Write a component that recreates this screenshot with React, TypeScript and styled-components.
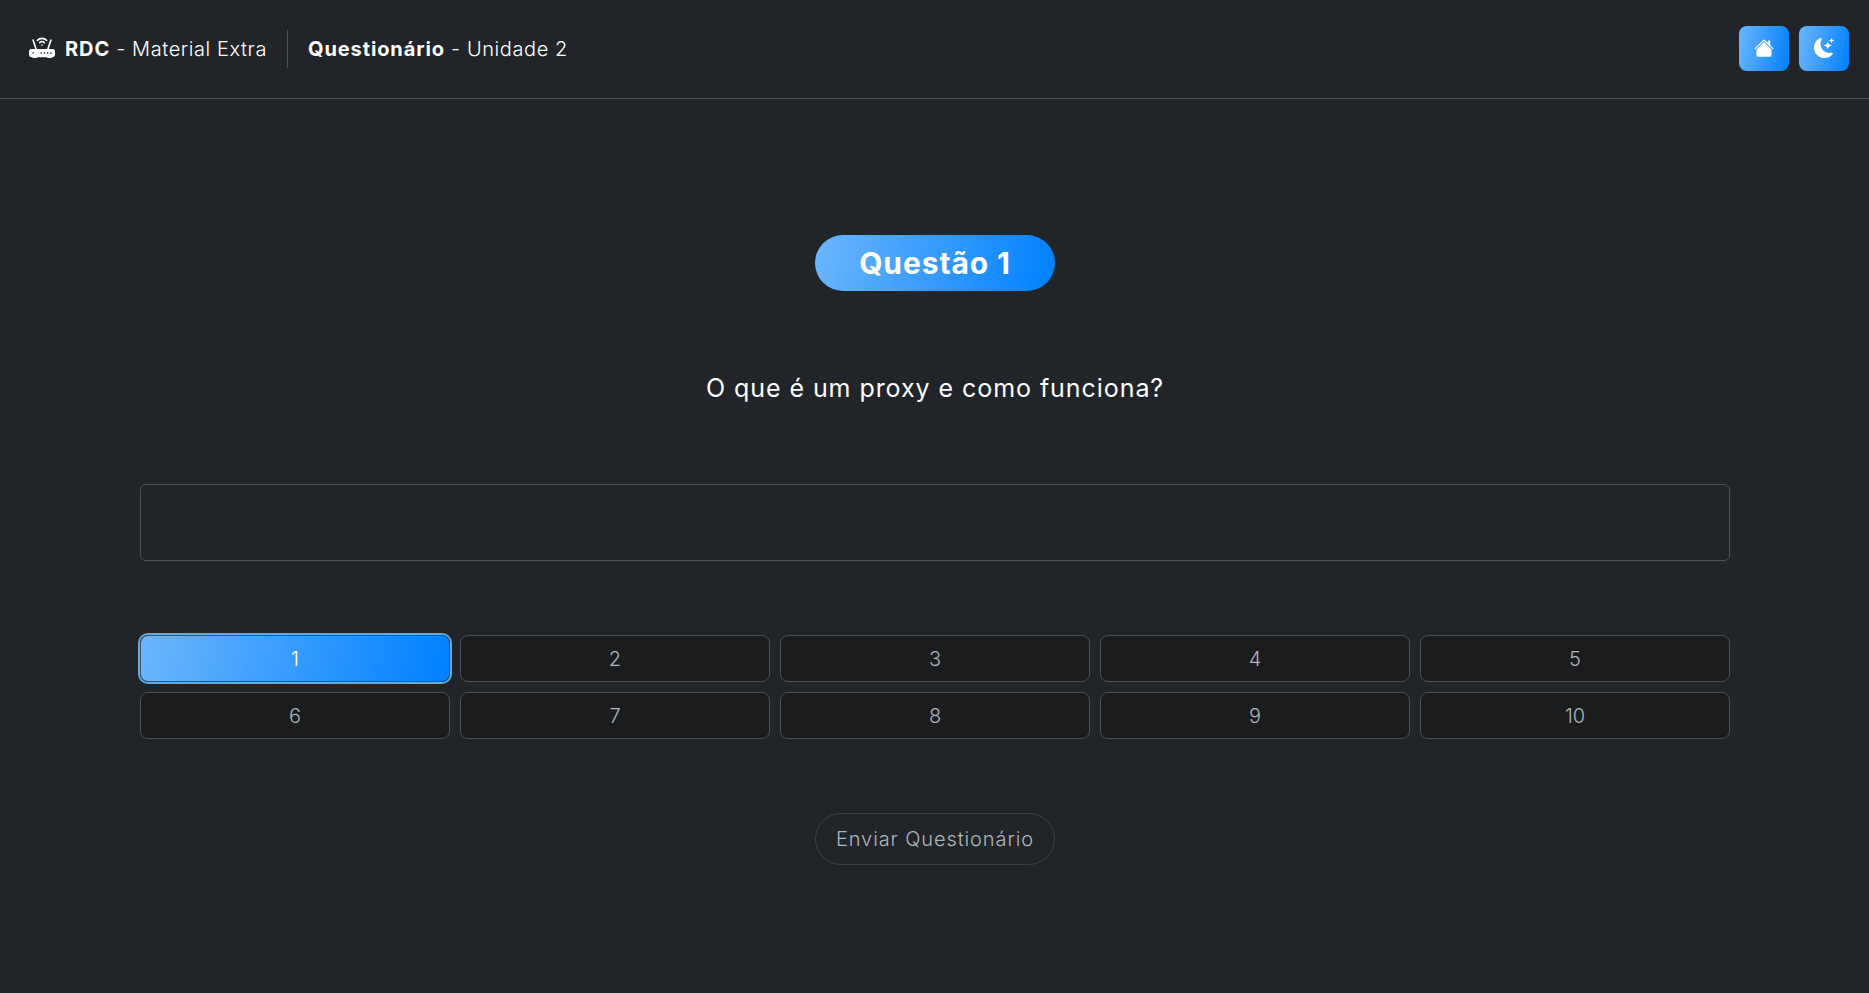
import React from 'react';
import styled, { createGlobalStyle } from 'styled-components';
import { BsHouseFill, BsMoonStarsFill, BsRouterFill } from 'react-icons/bs';

const GlobalStyle = createGlobalStyle`
  html, body {
    margin: 0;
    padding: 0;
    height: 100%;
    background: #212529;
  }

  * {
    box-sizing: border-box;
  }

  body {
    font-family: 'Inter', 'Liberation Sans', sans-serif;
    color: #ffffff;
  }
`;

const gradient = 'linear-gradient(100deg, #6cb6fb 0%, #0080ff 100%)';

const Page = styled.div`
  min-height: 993px;
  background: #212529;
`;

const Header = styled.header`
  display: flex;
  align-items: center;
  justify-content: space-between;
  height: 99px;
  padding: 0 20px 0 29px;
  border-bottom: 1px solid #495057;
`;

const Brand = styled.div`
  display: flex;
  align-items: center;
  font-size: 20px;
  font-weight: 300;
  letter-spacing: 0.58px;
  color: #ffffff;

  b {
    font-weight: 700;
    letter-spacing: 0.9px;
  }
`;

const BrandItem = styled.div`
  display: flex;
  align-items: center;
  gap: 10px;
  height: 38px;
`;

const Divider = styled.div`
  width: 1px;
  height: 38px;
  margin: 0 20px;
  background: #495057;
`;

const HeaderActions = styled.div`
  display: flex;
  gap: 10px;
  margin-top: -2px;
`;

const IconButton = styled.button`
  display: flex;
  align-items: center;
  justify-content: center;
  width: 50px;
  height: 45px;
  padding: 0;
  border: none;
  border-radius: 8px;
  background: ${gradient};
  color: #ffffff;
  font-size: 20px;
`;

const Main = styled.main`
  display: flex;
  flex-direction: column;
  align-items: center;
  padding: 136px 139px 0 140px;
`;

const Badge = styled.div`
  display: flex;
  align-items: center;
  justify-content: center;
  width: 240px;
  height: 56px;
  border-radius: 28px;
  background: ${gradient};
  font-size: 30px;
  font-weight: 700;
  letter-spacing: 0.9px;
`;

const Question = styled.p`
  margin: 79px 0 0;
  font-size: 25px;
  line-height: 36px;
  font-weight: 400;
  letter-spacing: 0.94px;
`;

const Answer = styled.textarea`
  display: block;
  width: 100%;
  height: 77px;
  margin-top: 78px;
  border: 1px solid #495057;
  border-radius: 6px;
  background: #212529;
  resize: none;
`;

const Pager = styled.div`
  display: grid;
  grid-template-columns: repeat(5, 1fr);
  gap: 10px;
  width: 100%;
  margin-top: 74px;
`;

const PageButton = styled.button<{ $active?: boolean }>`
  height: 47px;
  padding: 0;
  border: 1px solid #495057;
  border-radius: 8px;
  background: ${(p) => (p.$active ? gradient : '#1a1c1e')};
  color: ${(p) => (p.$active ? '#ffffff' : '#adb5bd')};
  font-family: inherit;
  font-size: 20px;
  font-weight: 300;
  box-shadow: ${(p) => (p.$active ? '0 0 0 2px #5cade9' : 'none')};
`;

const Submit = styled.button`
  width: 240px;
  height: 52px;
  margin-top: 74px;
  padding: 0;
  border: 1px solid #3d4349;
  border-radius: 26px;
  background: transparent;
  color: #adb5bd;
  font-family: inherit;
  font-size: 20px;
  font-weight: 300;
  letter-spacing: 0.9px;
`;

const pages = [1, 2, 3, 4, 5, 6, 7, 8, 9, 10];

export default function App() {
  return (
    <Page>
      <GlobalStyle />
      <Header>
        <Brand>
          <BrandItem>
            <BsRouterFill size={26} color="#fff" />
            <span>
              <b>RDC</b> - Material Extra
            </span>
          </BrandItem>
          <Divider />
          <BrandItem>
            <span>
              <b>Questionário</b> - Unidade 2
            </span>
          </BrandItem>
        </Brand>
        <HeaderActions>
          <IconButton>
            <BsHouseFill />
          </IconButton>
          <IconButton>
            <BsMoonStarsFill />
          </IconButton>
        </HeaderActions>
      </Header>
      <Main>
        <Badge>Questão 1</Badge>
        <Question>O que é um proxy e como funciona?</Question>
        <Answer />
        <Pager>
          {pages.map((n) => (
            <PageButton key={n} $active={n === 1}>
              {n}
            </PageButton>
          ))}
        </Pager>
        <Submit>Enviar Questionário</Submit>
      </Main>
    </Page>
  );
}
